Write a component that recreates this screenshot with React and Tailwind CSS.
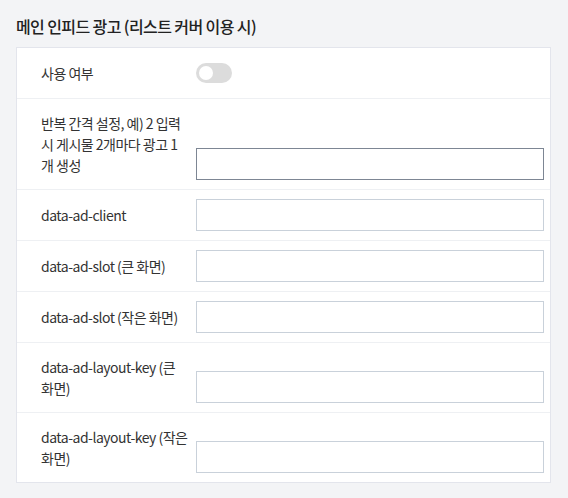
import React, { useState } from "react";

const fields = [
  { label: "반복 간격 설정, 예) 2 입력 시 게시물 2개마다 광고 1개 생성", active: true },
  { label: "data-ad-client" },
  { label: "data-ad-slot (큰 화면)" },
  { label: "data-ad-slot (작은 화면)" },
  { label: "data-ad-layout-key (큰 화면)" },
  { label: "data-ad-layout-key (작은 화면)" },
];

const Toggle = ({ on, onChange }) => (
  <button
    type="button"
    onClick={() => onChange(!on)}
    className={`relative w-9 h-5 rounded-full transition-colors ${
      on ? "bg-[#4f7df3]" : "bg-[#dcdcdc]"
    }`}>
    <span
      className={`absolute top-[3px] w-[14px] h-[14px] rounded-full bg-white transition-all ${
        on ? "left-[19px]" : "left-[3px]"
      }`}
    />
  </button>
);

export default function App() {
  const [enabled, setEnabled] = useState(false);

  return (
    <div className="min-h-screen bg-[#f3f4f6] px-4 pt-[14px] font-['Noto_Sans_CJK_KR','Noto_Sans',sans-serif]">
      <h2 className="text-[16px] leading-[24px] font-medium tracking-[-0.6px] text-[#222]">
        메인 인피드 광고 (리스트 커버 이용 시)
      </h2>
      <div className="mt-[9px] w-[535px] bg-white border border-[#e3e5ec]">
        <div className="flex items-center pl-6 pr-[6px] py-[9px]">
          <div className="w-[155px] shrink-0 pr-2 text-[14px] leading-[21px] tracking-[-0.5px] text-[#333]">
            사용 여부
          </div>
          <div className="h-8 flex items-center">
            <Toggle on={enabled} onChange={setEnabled} />
          </div>
        </div>
        {fields.map((f) => (
          <div
            key={f.label}
            className="flex items-end pl-6 pr-[6px] py-[9px] border-t border-[#eef0f3]">
            <label className="w-[155px] shrink-0 pr-2 min-h-8 py-[4.5px] flex items-center text-[14px] leading-[21px] tracking-[-0.5px] text-[#333]">
              {f.label}
            </label>
            <input
              type="text"
              className={`flex-1 h-8 px-2 text-[14px] bg-white outline-none border ${
                f.active ? "border-[#7d8694]" : "border-[#c9d1da]"
              }`}
            />
          </div>
        ))}
      </div>
    </div>
  );
}
